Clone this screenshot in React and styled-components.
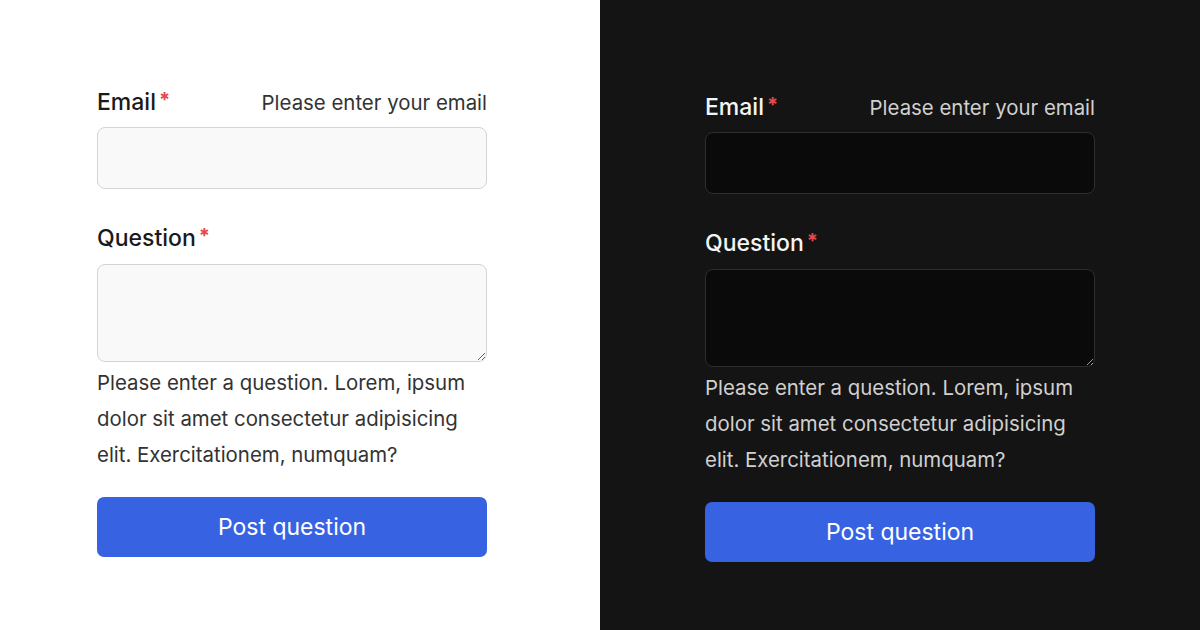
import React from 'react'
import styled, { createGlobalStyle } from 'styled-components'

const GlobalStyle = createGlobalStyle`
  html, body {
    margin: 0;
    padding: 0;
  }
  body {
    font-family: Inter, "Noto Sans", sans-serif;
  }
`;

const Page = styled.div`
  display: flex;
  width: 1200px;
  height: 630px;
`;

const Panel = styled.div`
  width: 600px;
  flex: none;
  background: ${(props) => (props.dark ? "#141414" : "#ffffff")};
  padding: ${(props) => (props.dark ? "93px 0 0 105px" : "88px 0 0 97px")};
  box-sizing: border-box;
`;

const Form = styled.form`
  width: 390px;
  display: flex;
  flex-direction: column;
`;

const LabelRow = styled.div`
  display: flex;
  justify-content: space-between;
  align-items: baseline;
  height: 28px;
  margin-top: ${(props) => (props.first ? "0" : "35px")};
`;

const Label = styled.label`
  font-size: 23px;
  line-height: 28px;
  font-weight: 500;
  color: ${(props) => (props.dark ? "#f4f4f4" : "#1a1a1a")};
`;

const Star = styled.span`
  color: #e5484d;
  margin-left: 3px;
  font-size: 20px;
  font-weight: 700;
  vertical-align: top;
  position: relative;
  top: -2px;
`;

const Hint = styled.span`
  font-size: 20.4px;
  line-height: 28px;
  color: ${(props) => (props.dark ? "#d0d0d0" : "#333333")};
`;

const Input = styled.input`
  display: block;
  box-sizing: border-box;
  width: 100%;
  height: 62px;
  margin-top: 11px;
  border-radius: 8px;
  border: 1.5px solid ${(props) => (props.dark ? "#2e2e2e" : "#d4d4d4")};
  background: ${(props) => (props.dark ? "#0a0a0a" : "#f9f9f9")};
  outline: none;
`;

const TextArea = styled.textarea`
  display: block;
  box-sizing: border-box;
  width: 100%;
  height: 98px;
  margin-top: 12px;
  border-radius: 8px;
  border: 1.5px solid ${(props) => (props.dark ? "#2e2e2e" : "#d4d4d4")};
  background: ${(props) => (props.dark ? "#0a0a0a" : "#f9f9f9")};
  color-scheme: ${(props) => (props.dark ? "dark" : "light")};
  outline: none;
`;

const Help = styled.p`
  margin: 3px 0 0;
  font-size: 20.4px;
  line-height: 36px;
  color: ${(props) => (props.dark ? "#d0d0d0" : "#333333")};
  padding-right: 12px;
`;

const Button = styled.button`
  margin-top: 24px;
  height: 60px;
  border: none;
  border-radius: 7px;
  background: #3763e3;
  color: #ffffff;
  font-family: Inter, "Noto Sans", sans-serif;
  font-size: 23px;
  cursor: pointer;
`;

const QuestionForm = ({ dark }) => (
  <Panel dark={dark}>
    <Form onSubmit={(e) => e.preventDefault()}>
      <LabelRow first>
        <Label dark={dark}>
          Email<Star>*</Star>
        </Label>
        <Hint dark={dark}>Please enter your email</Hint>
      </LabelRow>
      <Input dark={dark} type="email" />
      <LabelRow>
        <Label dark={dark}>
          Question<Star>*</Star>
        </Label>
      </LabelRow>
      <TextArea dark={dark} />
      <Help dark={dark}>
        Please enter a question. Lorem, ipsum dolor sit amet consectetur adipisicing elit. Exercitationem, numquam?
      </Help>
      <Button type="submit">Post question</Button>
    </Form>
  </Panel>
);

const App = () => (
  <>
    <GlobalStyle />
    <Page>
      <QuestionForm />
      <QuestionForm dark />
    </Page>
  </>
);

export default App;
